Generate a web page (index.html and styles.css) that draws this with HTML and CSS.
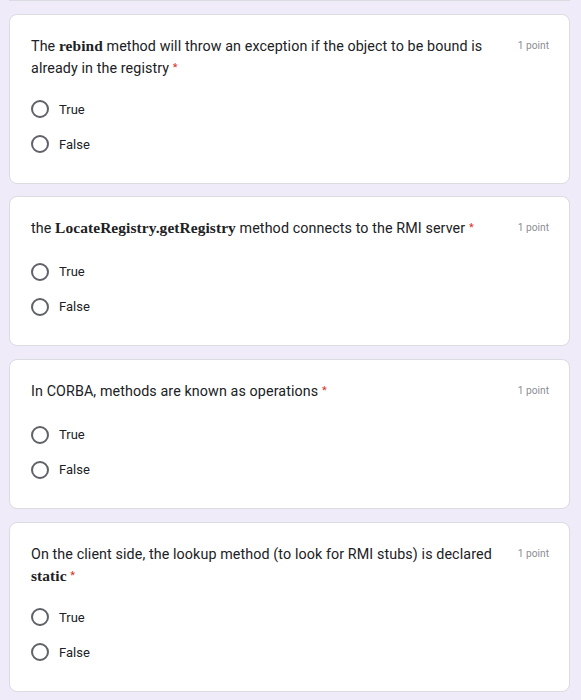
FILE: index.html
```html
<!DOCTYPE html>
<html>
<head>
<meta charset="utf-8">
<link rel="stylesheet" href="styles.css">
</head>
<body>
<div class="page">
  <div class="card-tail"></div>

  <div class="card">
    <div class="head">
      <div class="question">The <b class="code">rebind</b> method will throw an exception if the object to be bound is already in the registry <span class="req">*</span></div>
      <div class="points">1 point</div>
    </div>
    <div class="options">
      <div class="option"><span class="radio"></span><span class="label">True</span></div>
      <div class="option"><span class="radio"></span><span class="label">False</span></div>
    </div>
  </div>

  <div class="card">
    <div class="head">
      <div class="question">the <b class="code">LocateRegistry.getRegistry</b> method connects to the RMI server <span class="req">*</span></div>
      <div class="points">1 point</div>
    </div>
    <div class="options">
      <div class="option"><span class="radio"></span><span class="label">True</span></div>
      <div class="option"><span class="radio"></span><span class="label">False</span></div>
    </div>
  </div>

  <div class="card">
    <div class="head">
      <div class="question">In CORBA, methods are known as operations <span class="req">*</span></div>
      <div class="points">1 point</div>
    </div>
    <div class="options">
      <div class="option"><span class="radio"></span><span class="label">True</span></div>
      <div class="option"><span class="radio"></span><span class="label">False</span></div>
    </div>
  </div>

  <div class="card">
    <div class="head">
      <div class="question">On the client side, the lookup method (to look for RMI stubs) is declared <b class="code">static</b> <span class="req">*</span></div>
      <div class="points">1 point</div>
    </div>
    <div class="options">
      <div class="option"><span class="radio"></span><span class="label">True</span></div>
      <div class="option"><span class="radio"></span><span class="label">False</span></div>
    </div>
  </div>
</div>
</body>
</html>
```

FILE: styles.css
```css
html, body {
  margin: 0;
  padding: 0;
  background: #efebf8;
}

.page {
  display: flex;
  flex-direction: column;
  gap: 12.7px;
  padding: 0 11px 20px 9px;
  font-family: Roboto, "Liberation Sans", sans-serif;
  color: #202124;
}

.card-tail {
  height: 0;
  background: #fff;
  border-bottom: 1px solid #dadce0;
}

.card {
  background: #fff;
  border: 1px solid #dadce0;
  border-radius: 8px;
  padding: 20px 20px 21px 21px;
}

.head {
  display: flex;
  align-items: flex-start;
  min-height: 24px;
}

.question {
  flex: 1;
  font-size: 14.3px;
  line-height: 22px;
  padding-right: 24px;
  letter-spacing: 0.1px;
}

.code {
  font-family: "Liberation Serif", serif;
  font-weight: bold;
  font-size: 15.4px;
  line-height: 1;
}

.req {
  color: #d93025;
  font-size: 11px;
  line-height: 1;
  vertical-align: 2px;
}

.points {
  flex: none;
  white-space: nowrap;
  font-size: 10.2px;
  line-height: 22px;
  color: #8a8e93;
}

.options {
  margin-top: 13px;
  display: flex;
  flex-direction: column;
}

.option {
  height: 35px;
  display: flex;
  align-items: center;
  gap: 10px;
}

.radio {
  width: 14px;
  height: 14px;
  border: 2px solid #5f6368;
  border-radius: 50%;
  flex: none;
}

.label {
  font-size: 13px;
  color: #202124;
}
```
